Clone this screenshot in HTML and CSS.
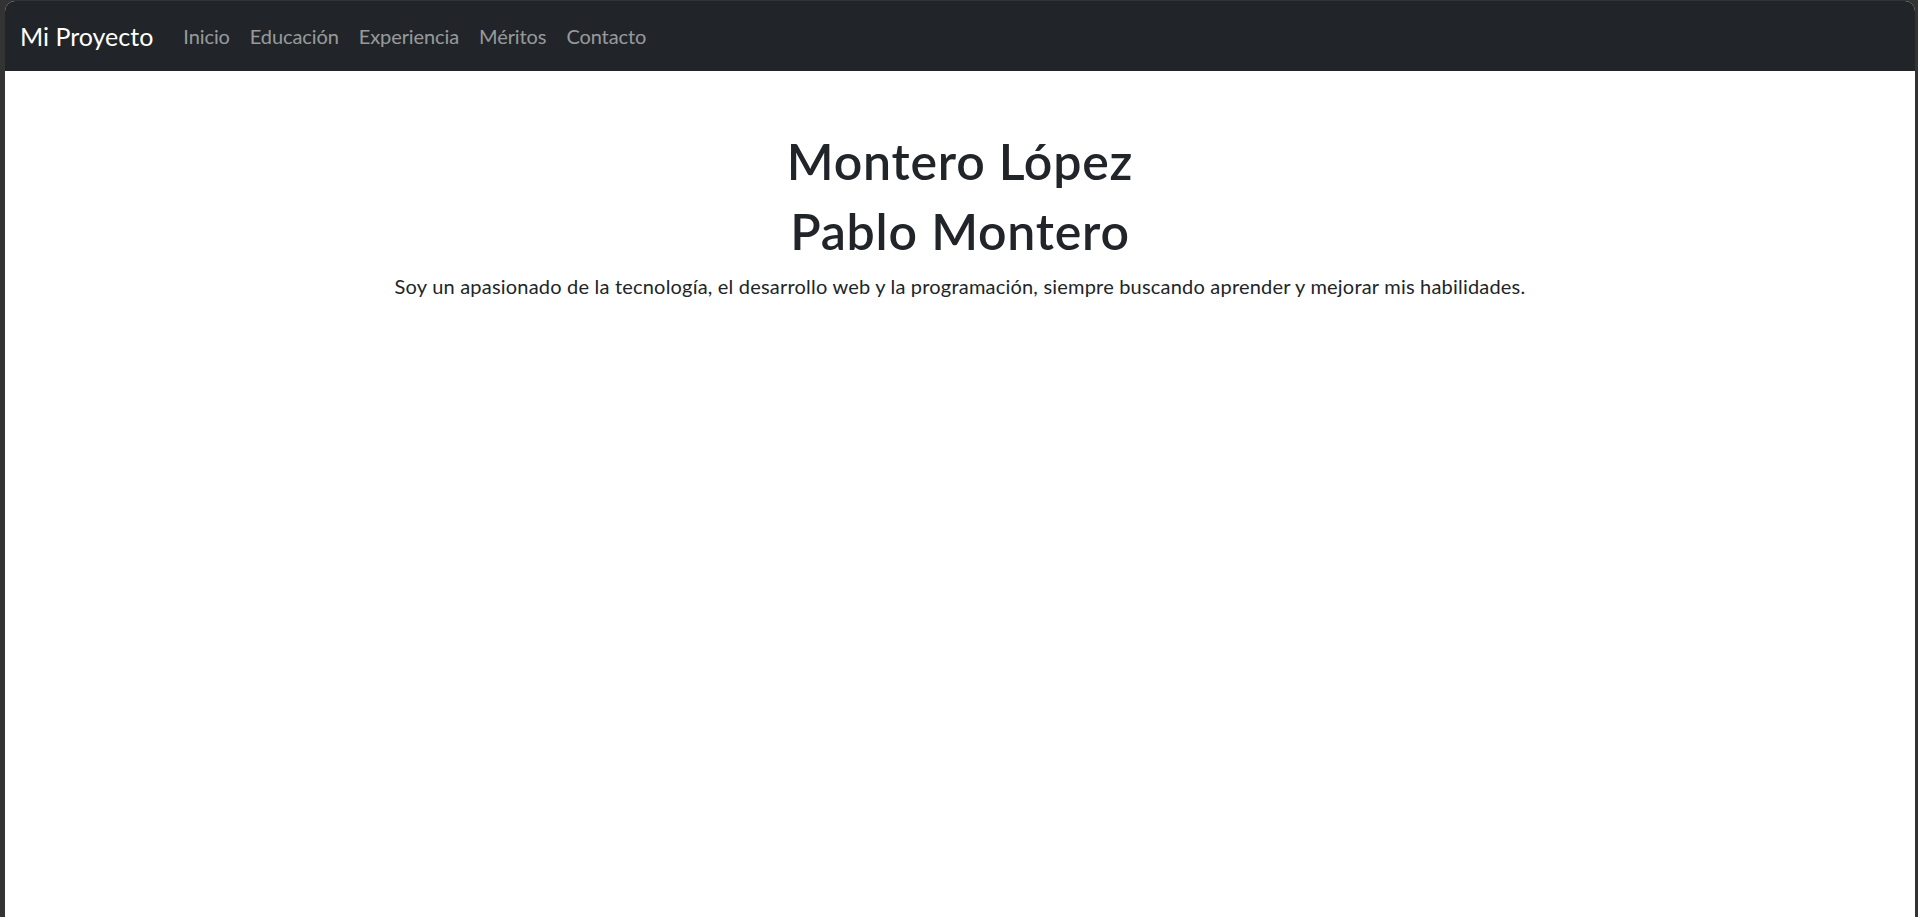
FILE: index.html
```html
<!DOCTYPE html>
<html lang="es">
<head>
<meta charset="utf-8">
<title>Mi Proyecto</title>
<link rel="stylesheet" href="styles.css">
</head>
<body>
<div class="window">
  <nav class="navbar">
    <a class="brand" href="#">Mi Proyecto</a>
    <ul class="nav">
      <li><a class="nav-link" href="#">Inicio</a></li>
      <li><a class="nav-link" href="#">Educación</a></li>
      <li><a class="nav-link" href="#">Experiencia</a></li>
      <li><a class="nav-link" href="#">Méritos</a></li>
      <li><a class="nav-link" href="#">Contacto</a></li>
    </ul>
  </nav>
  <main class="hero">
    <h1 class="title">Montero López</h1>
    <h1 class="title">Pablo Montero</h1>
    <p class="lead">Soy un apasionado de la tecnología, el desarrollo web y la programación, siempre buscando aprender y mejorar mis habilidades.</p>
  </main>
</div>
</body>
</html>
```

FILE: styles.css
```css
* { box-sizing: border-box; }

html, body {
  margin: 0;
  height: 100%;
}

body {
  background: #333333;
  padding: 1px 3px 0 5px;
  font-family: Lato, "Liberation Sans", sans-serif;
  color: #212529;
  overflow: hidden;
}

.window {
  height: 916px;
  background: #ffffff;
  border-radius: 10px 10px 0 0;
  overflow: hidden;
}

.navbar {
  display: flex;
  align-items: center;
  height: 70px;
  padding: 10px 15px;
  background: #212529;
}

.brand {
  color: #ffffff;
  font-size: 25px;
  line-height: 37px;
  text-decoration: none;
  margin-right: 20px;
}

.nav {
  display: flex;
  list-style: none;
  margin: 0;
  padding: 0;
}

.nav-link {
  display: block;
  padding: 10px;
  font-size: 20px;
  line-height: 30px;
  letter-spacing: -0.1px;
  color: rgba(255, 255, 255, 0.55);
  text-decoration: none;
}

.hero {
  padding: 60px 15px;
  text-align: center;
}

.title {
  margin: 0 0 10px;
  font-size: 50px;
  line-height: 60px;
  font-weight: 600;
  letter-spacing: 0.8px;
}

.lead {
  margin: 0;
  font-size: 20px;
  line-height: 30px;
  letter-spacing: 0.2px;
}
```
